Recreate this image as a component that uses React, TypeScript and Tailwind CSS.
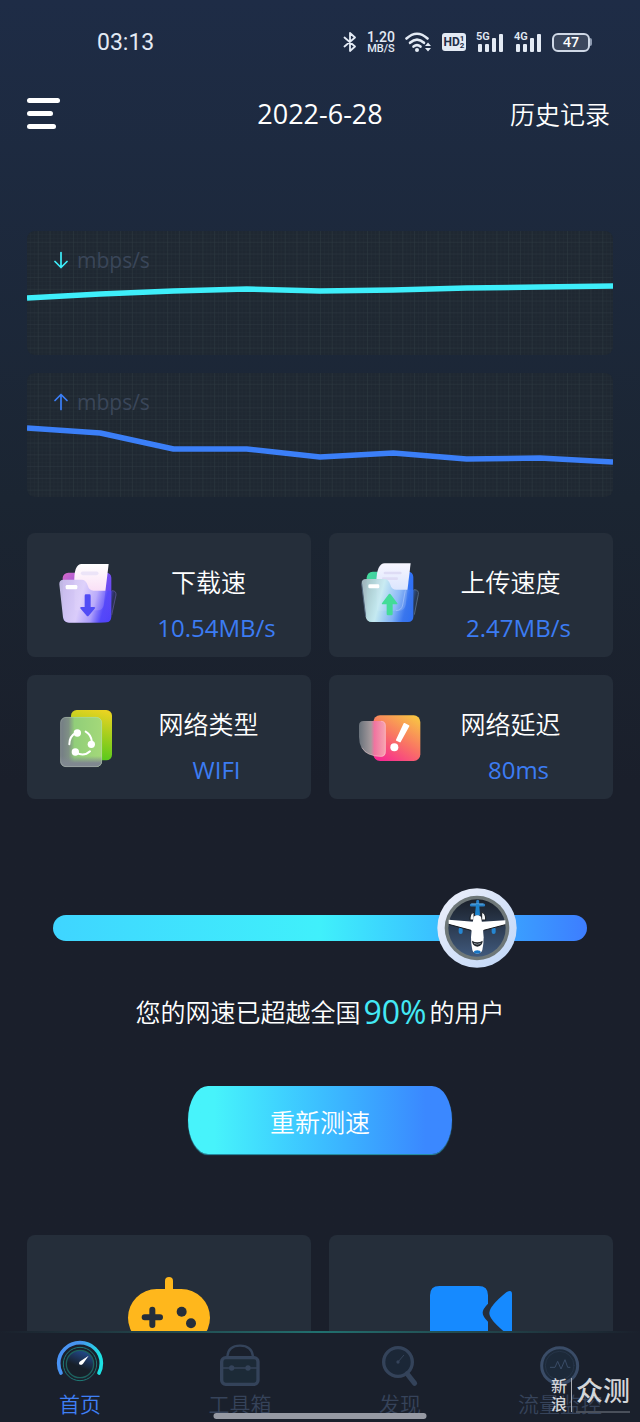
import { useState, type ReactNode } from "react";

function Signal({ label }: { label: string }) {
  return (
    <span className="relative block h-5 w-7">
      <span className="absolute -top-px left-0 font-['Roboto',sans-serif] text-[11px] leading-[11px] font-semibold">{label}</span>
      <svg viewBox="0 0 28 20" className="h-5 w-7" fill="currentColor" aria-hidden="true">
        <rect x="2" y="12" width="4" height="8" rx="1" />
        <rect x="9" y="12" width="4" height="8" rx="1" />
        <rect x="16" y="6" width="4" height="14" rx="1" />
        <rect x="23" y="2" width="4" height="18" rx="1" />
      </svg>
    </span>
  );
}

function StatusBar() {
  return (
    <div className="flex h-[84px] items-center justify-between pr-12 pl-[97px] text-[#e3eaf4]">
      <span className="pt-0.5 font-['Roboto',sans-serif] text-[23px]">03:13</span>
      <div className="flex items-center gap-2.5">
        <svg viewBox="0 0 14 20" className="h-5 w-3.5" fill="none" stroke="currentColor" strokeWidth="1.8" strokeLinejoin="round" strokeLinecap="round" aria-label="Bluetooth">
          <path d="M1.5 5.5 12 14.5 7 19V1l5 4.5L1.5 14.5" />
        </svg>
        <span className="flex w-7 flex-col items-center font-['Roboto',sans-serif] font-medium">
          <span className="text-sm leading-3">1.20</span>
          <span className="text-[11px] leading-[11px]">MB/S</span>
        </span>
        <svg viewBox="0 0 27 20" className="h-5 w-[27px]" fill="none" stroke="currentColor" strokeWidth="2.6" strokeLinecap="round" aria-label="Wi-Fi">
          <path d="M1.5 6.5Q12 -3 22.5 6.5" />
          <path d="M5 10.8Q12 4.5 19 10.8" />
          <path d="M8.5 14.6Q12 11.6 15.5 14.6" />
          <circle cx="12" cy="18" r="2" fill="currentColor" stroke="none" />
          <path d="m20 14 3-3.5 3 3.5zM20 16l3 3.5 3-3.5z" fill="currentColor" stroke="none" />
        </svg>
        <span className="flex h-[18px] w-6 items-center justify-center rounded-[3px] bg-[#e3eaf4] font-['Roboto',sans-serif] text-[#1f2d46]">
          <span className="text-xs leading-4 font-bold">HD</span>
          <span className="flex flex-col text-[8px] leading-[7px] font-bold">
            <span>1</span>
            <span>2</span>
          </span>
        </span>
        <Signal label="5G" />
        <Signal label="4G" />
        <span className="flex items-center">
          <span className="flex h-[19px] w-[38px] items-center justify-center rounded-md border-2 border-[#cfd8e6] bg-[#3b475d] text-sm leading-4 font-semibold text-white">
            47
          </span>
          <span className="h-2 w-0.5 rounded-r bg-[#8d9ab0]" />
        </span>
      </div>
    </div>
  );
}

function Header() {
  return (
    <header className="grid h-[60px] grid-cols-[1fr_auto_1fr] items-center px-[27px] text-white">
      <button type="button" aria-label="菜单" className="flex flex-col items-start gap-2 justify-self-start pb-0.5">
        <span className="h-[5px] w-[33px] rounded-sm bg-white" />
        <span className="h-[5px] w-[26px] rounded-sm bg-white" />
        <span className="h-[5px] w-[29px] rounded-sm bg-white" />
      </button>
      <h1 className="text-[27px] leading-9 font-normal">2022-6-28</h1>
      <a href="#history" className="justify-self-end pr-[3px] text-[25px] leading-9 font-[350]">
        历史记录
      </a>
    </header>
  );
}

type ChartProps = { id: string; values: number[]; color: string; direction: "up" | "down" };

function SpeedChart({ id, values, color, direction }: ChartProps) {
  const points = values.map((v, i) => `${(i * 586) / (values.length - 1)},${v}`).join(" ");
  return (
    <div className="relative h-[124px] overflow-hidden rounded-lg bg-[#1f2832]">
      <svg className="block h-full w-full" viewBox="0 0 586 124" preserveAspectRatio="none" aria-hidden="true">
        <defs>
          <pattern id={`${id}-minor`} width="3.92" height="3.92" patternUnits="userSpaceOnUse">
            <path d="M3.92 0V3.92H0" fill="none" stroke="#8fb3a8" strokeOpacity=".04" strokeWidth="1" />
          </pattern>
          <pattern id={`${id}-major`} width="11.76" height="11.76" patternUnits="userSpaceOnUse">
            <path d="M11.76 0V11.76H0" fill="none" stroke="#8fb3a8" strokeOpacity=".09" strokeWidth="1" />
          </pattern>
        </defs>
        <rect width="586" height="124" fill={`url(#${id}-minor)`} />
        <rect width="586" height="124" fill={`url(#${id}-major)`} />
        <polyline points={points} fill="none" stroke={color} strokeWidth="5.5" strokeLinejoin="round" />
      </svg>
      <div className="absolute top-3.5 left-[25px] flex items-center gap-[7px] text-[21px] leading-[30px] font-normal text-[#3a4659]">
        <svg viewBox="0 0 18 18" className="size-[18px]" fill="none" stroke={color} strokeWidth="1.7" strokeLinecap="round" strokeLinejoin="round" aria-hidden="true">
          {direction === "down" ? <path d="M9 1.5v15M3 10.5l6 6 6-6" /> : <path d="M9 16.5v-15M3 7.5l6-6 6 6" />}
        </svg>
        <span>mbps/s</span>
      </div>
    </div>
  );
}

function DownloadIcon() {
  return (
    <svg viewBox="111 114 192 192" className="size-16" aria-hidden="true">
      <defs>
        <linearGradient id="dlBack" x1="0" x2="1" y1="0" y2="1">
          <stop offset="0" stopColor="#d669c6" />
          <stop offset=".45" stopColor="#7a50ee" />
          <stop offset="1" stopColor="#4b41fb" />
        </linearGradient>
        <linearGradient id="dlFront" x1="0" x2="1" y1="0" y2=".2">
          <stop offset="0" stopColor="#c5bcea" stopOpacity=".95" />
          <stop offset=".45" stopColor="#ddd0fb" stopOpacity=".97" />
          <stop offset=".7" stopColor="#b3a6fb" stopOpacity=".9" />
          <stop offset=".88" stopColor="#5349fa" stopOpacity=".8" />
          <stop offset="1" stopColor="#5147fa" stopOpacity=".15" />
        </linearGradient>
        <linearGradient id="dlPaper" x1="0" x2="0" y1="0" y2="1">
          <stop offset="0" stopColor="#fff" />
          <stop offset="1" stopColor="#f6c9ef" />
        </linearGradient>
      </defs>
      <path d="M128 158q2-14 17-15h112q16 0 17 15v116q0 18-16 18H146q-16 0-16-18z" fill="url(#dlBack)" />
      <path d="M163 175q-2-58 22-58h81l-15 124q-3 15-17 15h-70z" fill="url(#dlPaper)" />
      <path d="M188 145h42" stroke="#ece4f8" strokeWidth="11" strokeLinecap="round" />
      <path d="M118 178q-1-14 13-14h54q13 0 18 17 4 16 18 16h54q14 0 13 14l-14 66q-3 16-18 16H147q-15 0-18-16z" fill="url(#dlFront)" />
      <path d="M276 197q13 0 12 13l-13 60" fill="none" stroke="#514d83" strokeWidth="3" />
      <rect x="137" y="180" width="35" height="13" rx="4" fill="#fff" />
      <path d="M194 212q0-4 4-4h10q4 0 4 4v34h10q6 0 2 5l-18 21q-3 3-6 0l-18-21q-4-5 2-5h10z" fill="#514cf5" />
    </svg>
  );
}

function UploadIcon() {
  return (
    <svg viewBox="117 114 192 192" className="size-16" aria-hidden="true">
      <defs>
        <linearGradient id="ulBack" x1="0" x2="1" y1="0" y2=".3">
          <stop offset="0" stopColor="#42dc9a" />
          <stop offset=".3" stopColor="#44cba8" />
          <stop offset=".7" stopColor="#397af4" />
          <stop offset="1" stopColor="#2f6ff5" />
        </linearGradient>
        <linearGradient id="ulFront" x1="0" x2="1" y1="0" y2=".2">
          <stop offset="0" stopColor="#a2b8bf" stopOpacity=".95" />
          <stop offset=".4" stopColor="#c8ebf2" stopOpacity=".97" />
          <stop offset=".7" stopColor="#86b6f6" stopOpacity=".9" />
          <stop offset=".88" stopColor="#3c77ed" stopOpacity=".8" />
          <stop offset="1" stopColor="#3c77dd" stopOpacity=".15" />
        </linearGradient>
        <linearGradient id="ulPaper" x1="0" x2="0" y1="0" y2="1">
          <stop offset="0" stopColor="#f7f6ff" />
          <stop offset="1" stopColor="#c6d8fc" />
        </linearGradient>
      </defs>
      <path d="M140 158q2-17 18-18h105q16 0 17 16v117q0 18-17 18H157q-16 0-17-18z" fill="url(#ulBack)" />
      <path d="M169 172q1-57 25-57h78l-15 124q-3 16-18 18h-68z" fill="url(#ulPaper)" />
      <path d="M195 144h46M190 161h40" stroke="#dedcf5" strokeWidth="8" strokeLinecap="round" />
      <path d="M125 176q-1-14 13-14h55q13 0 18 17 4 15 18 15h53q15 0 13 14l-13 67q-3 16-18 16H156q-16 0-19-16z" fill="url(#ulFront)" />
      <path d="M256 196 248 240q-3 16-20 17" fill="none" stroke="#b1cdfc" strokeOpacity=".6" strokeWidth="3" />
      <path d="M282 194q15 0 13 14l-12 61M125 176l12 99" fill="none" stroke="#52657b" strokeWidth="3" />
      <rect x="145" y="178" width="33" height="12" rx="4" fill="#fff" />
      <path d="M200 267q0 4 4 4h10q4 0 4-4v-29h11q6 0 2-5l-18-24q-4-5-8 0l-18 24q-4 5 2 5h11z" fill="#43dc98" />
    </svg>
  );
}

function NetworkTypeIcon() {
  return (
    <svg viewBox="111 111 192 192" className="size-16" aria-hidden="true">
      <defs>
        <linearGradient id="ntBack" x1=".7" x2=".5" y1="0" y2="1">
          <stop offset="0" stopColor="#e9d321" />
          <stop offset="1" stopColor="#50c91b" />
        </linearGradient>
        <linearGradient id="ntFront" x1="0" x2="1" y1="0" y2="0">
          <stop offset="0" stopColor="#737b85" />
          <stop offset=".2" stopColor="#7f9085" />
          <stop offset=".34" stopColor="#91ce79" />
          <stop offset="1" stopColor="#a4d979" />
        </linearGradient>
        <linearGradient id="ntFade" x1="0" x2="0" y1="0" y2="1">
          <stop offset=".78" stopColor="#808890" stopOpacity="0" />
          <stop offset=".92" stopColor="#808890" />
        </linearGradient>
      </defs>
      <rect x="153" y="126" width="123" height="151" rx="17" fill="url(#ntBack)" />
      <rect x="121" y="147" width="125" height="150" rx="17" fill="url(#ntFront)" />
      <rect x="121" y="147" width="125" height="150" rx="17" fill="url(#ntFade)" />
      <rect x="122" y="148" width="123" height="148" rx="16" fill="none" stroke="#d4e4ce" strokeOpacity=".45" strokeWidth="2" />
      <g fill="none" stroke="#fff" strokeWidth="6" strokeLinecap="round">
        <path d="M148 229q0-24 19-34M197 191q17 9 19 32M168 254q24 13 42-4" />
      </g>
      <g fill="#fff">
        <circle cx="172" cy="195" r="11" />
        <circle cx="214" cy="229" r="11" />
        <circle cx="166" cy="252" r="11" />
      </g>
    </svg>
  );
}

function LatencyIcon() {
  return (
    <svg viewBox="117 111 192 192" className="size-16" aria-hidden="true">
      <defs>
        <linearGradient id="ltBack" x1=".85" x2=".2" y1="0" y2="1">
          <stop offset="0" stopColor="#f8c344" />
          <stop offset=".5" stopColor="#f97663" />
          <stop offset="1" stopColor="#f72c91" />
        </linearGradient>
        <linearGradient id="ltFront" x1="0" x2="1" y1="0" y2="0">
          <stop offset="0" stopColor="#68717a" />
          <stop offset=".45" stopColor="#a59a9d" />
          <stop offset=".58" stopColor="#ef74a0" />
          <stop offset="1" stopColor="#f7a4b0" />
        </linearGradient>
      </defs>
      <rect x="160" y="142" width="141" height="137" rx="20" fill="url(#ltBack)" />
      <path d="M131 159h52q14 0 14 14v78q0 15-14 15-42 0-58-26-8-14-8-34v-33q0-14 14-14z" fill="url(#ltFront)" />
      <path d="M183 160q13 0 13 14v76q0 14-13 15-42 0-57-26" fill="none" stroke="#ffd3d9" strokeOpacity=".6" strokeWidth="2" />
      <path d="M251 166q1-2 3-1l13 7q2 1 1 3l-26 47q-1 2-3 1l-10-5q-2-1-1-3z" fill="#fff" />
      <circle cx="223" cy="238" r="12" fill="#fff" />
    </svg>
  );
}

function StatCard({ icon, title, value }: { icon: ReactNode; title: string; value: string }) {
  return (
    <div className="flex h-[124px] items-center gap-px rounded-lg bg-[#252e3a] pl-[30px]">
      {icon}
      <div className="flex flex-1 flex-col items-center gap-2.5 pt-5">
        <h2 className="pr-4 text-[25px] leading-9 font-[350] text-white">{title}</h2>
        <p className="text-2xl leading-9 font-normal text-[#3c7cf3]">{value}</p>
      </div>
    </div>
  );
}

function PlaneKnob() {
  return (
    <svg viewBox="52 54 240 240" className="size-20" aria-hidden="true">
      <defs>
        <linearGradient id="rim" x1="0" x2="1" y1="0" y2="1">
          <stop offset="0" stopColor="#eef0fa" />
          <stop offset="1" stopColor="#bfd6f8" />
        </linearGradient>
        <linearGradient id="sky" x1="0" x2="0" y1="0" y2="1">
          <stop offset="0" stopColor="#1a202a" />
          <stop offset="1" stopColor="#40597c" />
        </linearGradient>
      </defs>
      <circle cx="172" cy="174" r="119" fill="url(#rim)" />
      <circle cx="172" cy="174" r="97" fill="#6e7778" />
      <circle cx="172" cy="174" r="86" fill="url(#sky)" />
      <path d="M174 94v44M155 105h37" stroke="#287fc5" strokeWidth="9" strokeLinecap="round" />
      <path d="M155 102h36" stroke="#83c8f4" strokeWidth="2" />
      <path d="M151 150q-1-20 12-23v23zM198 150q1-20-12-23v23z" fill="#f5f7f8" stroke="#161b20" strokeWidth="3" />
      <path d="M123 178v8M222 178v8" stroke="#2586d2" strokeWidth="12" strokeLinecap="round" />
      <path d="m87 149 74 6h26l70-4v13l-65 17h-38l-67-18z" fill="#fff" />
      <path d="m87 163 67 18M257 164l-65 17" stroke="#15191e" strokeWidth="3" />
      <path d="M162 140q10-8 22 0 6 28 8 62 0 20-4 38-3 10-15 11-12-1-15-11-4-18-4-38 2-34 8-62z" fill="#fff" />
      <path d="M169 103h9l3 32h-15z" fill="#1b83cc" />
      <path d="M157 212q16 9 32 0 0 15-16 18-16-3-16-18z" fill="#22272d" />
      <path d="M163 220q10 6 20 0" fill="none" stroke="#8b9298" strokeWidth="3" />
      <ellipse cx="173" cy="246" rx="10" ry="5" fill="#1674c3" />
    </svg>
  );
}

function RankSlider() {
  const [value, setValue] = useState(84.5);
  return (
    <div className="relative mx-[26px] flex h-20 items-center">
      <input
        type="range"
        min={0}
        max={100}
        step={0.5}
        value={value}
        onChange={(e) => setValue(Number(e.target.value))}
        aria-label="网速排名"
        className="m-0 h-[26px] w-full appearance-none rounded-full bg-linear-to-r from-[#3fd5ff] via-[#40f0fb] to-[#3d7dff] [&::-webkit-slider-thumb]:size-20 [&::-webkit-slider-thumb]:appearance-none [&::-webkit-slider-thumb]:opacity-0"
      />
      <div
        className="pointer-events-none absolute top-0 -translate-x-1/2"
        style={{ left: `calc(40px + (100% - 80px) * ${value / 100})` }}
      >
        <PlaneKnob />
      </div>
    </div>
  );
}

function GameIcon() {
  return (
    <svg viewBox="381 150 252 240" className="h-20 w-[84px]" aria-hidden="true">
      <rect x="495" y="156" width="24" height="60" rx="12" fill="#ffb71c" />
      <rect x="384" y="192" width="246" height="172" rx="86" fill="#ffb71c" />
      <path d="M457 254v46M434 277h46" stroke="#252e3a" strokeWidth="18" strokeLinecap="round" />
      <circle cx="545" cy="260" r="15" fill="#252e3a" />
      <circle cx="573" cy="295" r="15" fill="#252e3a" />
    </svg>
  );
}

function VideoIcon() {
  return (
    <svg viewBox="327 150 252 240" className="h-20 w-[84px]" fill="#168aff" aria-hidden="true">
      <path d="M330 211q0-28 28-28h118q28 0 28 28v25q-16 16-16 27t16 27v30q0 28-28 28H358q-28 0-28-28z" />
      <path d="M508 264q0-21 52-63 16-9 16 6v113q0 15-16 6-52-41-52-62z" />
    </svg>
  );
}

function HomeIcon() {
  return (
    <svg viewBox="168 345 144 144" className="size-12" fill="none" aria-hidden="true">
      <defs>
        <linearGradient id="arc" x1="0" x2="1" y1="0" y2=".2">
          <stop offset="0" stopColor="#4a93f8" />
          <stop offset=".5" stopColor="#4795ee" />
          <stop offset="1" stopColor="#1de1e4" />
        </linearGradient>
        <linearGradient id="dial" x1=".7" x2=".45" y1="0" y2=".6">
          <stop offset="0" stopColor="#234c91" />
          <stop offset="1" stopColor="#171f29" />
        </linearGradient>
      </defs>
      <path d="M183 444q-7-12-7-29a64 62 0 0 1 128 0q0 17-7 29" stroke="url(#arc)" strokeWidth="11" strokeLinecap="round" />
      <circle cx="240" cy="417" r="50" stroke="#1e7976" strokeWidth="3" />
      <circle cx="240" cy="417" r="41" fill="url(#dial)" stroke="#1d625f" strokeWidth="4" />
      <path d="m266 392-17 24q-7 7-12 0-1-6 6-9z" fill="#fff" />
    </svg>
  );
}

function ToolboxIcon() {
  return (
    <svg viewBox="648 345 144 144" className="size-12" fill="none" stroke="#34435a" aria-hidden="true">
      <path d="M682 394q3-32 38-32t39 32" strokeWidth="7" />
      <rect x="665" y="398" width="109" height="80" rx="12" fill="#1c2a37" strokeWidth="10" />
      <path d="M668 429h104" strokeWidth="4" />
      <circle cx="695" cy="429" r="8" fill="#34435a" stroke="none" />
      <circle cx="744" cy="429" r="8" fill="#34435a" stroke="none" />
    </svg>
  );
}

function DiscoverIcon() {
  return (
    <svg viewBox="168 345 144 144" className="size-12" fill="none" stroke="#34435a" strokeLinecap="round" aria-hidden="true">
      <circle cx="234" cy="411" r="43" fill="#1b2737" strokeWidth="10" />
      <path d="m261 446 23 29" strokeWidth="15" />
      <path d="m234 411 17-20" strokeWidth="3" />
      <circle cx="234" cy="411" r="5" fill="#34435a" stroke="none" />
    </svg>
  );
}

function TrafficIcon() {
  return (
    <svg viewBox="648 345 144 144" className="size-12" fill="none" stroke="#3a4c67" strokeLinecap="round" strokeLinejoin="round" aria-hidden="true">
      <circle cx="719" cy="422" r="54" fill="#1c2939" strokeWidth="9" />
      <circle cx="719" cy="422" r="43" stroke="#2a3a4e" strokeWidth="2" />
      <path d="M691 427h14l8-18 10 23 12-28 8 23h7" strokeWidth="3" />
    </svg>
  );
}

const tabs = [
  { label: "首页", icon: <HomeIcon />, active: true },
  { label: "工具箱", icon: <ToolboxIcon />, active: false },
  { label: "发现", icon: <DiscoverIcon />, active: false },
  { label: "流量监控", icon: <TrafficIcon />, active: false },
];

function TabBar() {
  return (
    <nav className="relative bg-[#1a202c]">
      <div className="h-0.5 bg-linear-to-r from-[#1a202c] via-[#20706f] to-[#1a202c]" />
      <div className="grid grid-cols-4 pt-[7px] pb-1.5">
        {tabs.map((tab) => (
          <a key={tab.label} href="#" className="flex flex-col items-center gap-1">
            {tab.icon}
            <span
              className={
                tab.active
                  ? "text-[21px] leading-6 font-[350] text-[#3f7ff5]"
                  : "text-[21px] leading-6 font-[350] text-[#36435a]"
              }
            >
              {tab.label}
            </span>
          </a>
        ))}
      </div>
      <div className="absolute bottom-[3px] left-1/2 h-1.5 w-[213px] -translate-x-1/2 rounded-full bg-[#9699a3]" />
      <div className="absolute right-2.5 bottom-[9px] flex items-center gap-1 text-[#d3d5d9]">
        <span className="flex flex-col text-base leading-[18px] font-medium">
          <span>新</span>
          <span>浪</span>
        </span>
        <span className="h-[34px] w-px bg-[#a9acb2]" />
        <span className="border-b-2 border-[#4a505b] pb-1.5 text-[27px] leading-7 font-medium">众测</span>
      </div>
    </nav>
  );
}

export default function App() {
  return (
    <div className="flex h-screen flex-col bg-linear-to-b from-[#1e2c46] from-0% via-[#1b2532] via-35% to-[#1a1f2b] to-55% font-['Open_Sans','Noto_Sans_CJK_SC',sans-serif]">
      <StatusBar />
      <Header />
      <main className="flex-1 overflow-hidden px-[27px] pt-[87px]">
        <section className="flex flex-col gap-[18px]">
          <SpeedChart id="down" values={[67, 63, 60, 58, 60, 59, 57, 56, 55]} color="#3eeefa" direction="down" />
          <SpeedChart id="up" values={[55, 60, 76, 76, 84, 80, 86, 85, 89]} color="#3b7ff8" direction="up" />
        </section>
        <section className="mt-9 grid grid-cols-2 gap-[18px]">
          <StatCard icon={<DownloadIcon />} title="下载速" value="10.54MB/s" />
          <StatCard icon={<UploadIcon />} title="上传速度" value="2.47MB/s" />
          <StatCard icon={<NetworkTypeIcon />} title="网络类型" value="WIFI" />
          <StatCard icon={<LatencyIcon />} title="网络延迟" value="80ms" />
        </section>
        <section className="mt-[89px]">
          <RankSlider />
          <p className="mt-[26px] flex items-center justify-center gap-[3px] text-[25px] leading-9 font-[350] text-white">
            <span>您的网速已超越全国</span>
            <span className="text-[32px] font-normal text-[#43e9f5]">90%</span>
            <span>的用户</span>
          </p>
          <button
            type="button"
            className="mx-auto mt-14 flex h-[68px] w-[264px] items-center justify-center rounded-[20px/34px] bg-linear-to-r from-[#47f3fb] from-10% to-[#3b88ff] to-90% pt-1.5 text-[25px] font-[350] text-white shadow-[0_1px_1px_#2797ae]"
          >
            重新测速
          </button>
        </section>
        <section className="mt-[81px] grid grid-cols-2 gap-[18px]">
          <a href="#game" aria-label="游戏测速" className="flex h-40 justify-center rounded-lg bg-[#252e3a] pt-10">
            <GameIcon />
          </a>
          <a href="#video" aria-label="视频测速" className="flex h-40 justify-center rounded-lg bg-[#252e3a] pt-10">
            <VideoIcon />
          </a>
        </section>
      </main>
      <TabBar />
    </div>
  );
}
